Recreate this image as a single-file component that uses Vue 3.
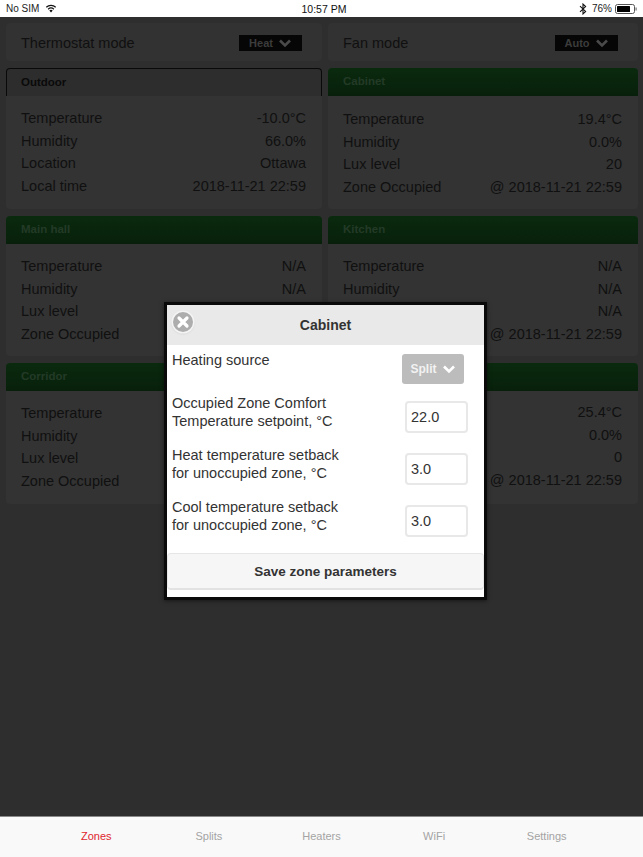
<template>
  <div class="screen">
    <div class="statusBar">
      <div class="statusLeft">
        <span>No SIM</span>
        <svg width="12" height="9" viewBox="0 0 15 11">
          <path d="M7.5 10.5 L5.4 8 A3.2 3.2 0 0 1 9.6 8 Z" fill="#111" />
          <path d="M3.9 6.3 A5.6 5.6 0 0 1 11.1 6.3" fill="none" stroke="#111" stroke-width="1.6" />
          <path d="M1.6 3.9 A8.8 8.8 0 0 1 13.4 3.9" fill="none" stroke="#111" stroke-width="1.6" />
        </svg>
      </div>
      <div class="statusTime">10:57 PM</div>
      <div class="statusRight">
        <svg width="8" height="12" viewBox="0 0 8 12">
          <path d="M1 3.2 L6.6 8.4 L4 10.9 V1.1 L6.6 3.6 L1 8.8" fill="none" stroke="#111" stroke-width="1.1" />
        </svg>
        <span class="batteryText">76%</span>
        <svg width="22" height="10" viewBox="0 0 22 10">
          <rect x="0.5" y="0.5" width="19" height="9" rx="2" fill="none" stroke="#555" />
          <rect x="2" y="2" width="13" height="6" rx="0.5" fill="#000" />
          <rect x="20.5" y="3.5" width="1.2" height="3" fill="#777" />
        </svg>
      </div>
    </div>

    <div class="main">
      <div class="grid">
        <div class="modeBox">
          <span>Thermostat mode</span>
          <div class="modeSelect">Heat
            <svg width="14" height="10" viewBox="0 0 14 10"><path d="M2 2.5 L7 7.5 L12 2.5" fill="none" stroke="#4a4a4a" stroke-width="2.6" /></svg>
          </div>
        </div>
        <div class="modeBox">
          <span>Fan mode</span>
          <div class="modeSelect">Auto
            <svg width="14" height="10" viewBox="0 0 14 10"><path d="M2 2.5 L7 7.5 L12 2.5" fill="none" stroke="#4a4a4a" stroke-width="2.6" /></svg>
          </div>
        </div>

        <div v-for="zone in zones" :key="zone.id" class="card">
          <div :class="['cardHeader', zone.outdoor ? 'outdoorHeader' : 'zoneHeader']">{{ zone.name }}</div>
          <div class="cardBody">
            <div v-for="(row, i) in zone.rows" :key="i" class="cardRow">
              <span>{{ row[0] }}</span>
              <span>{{ row[1] }}</span>
            </div>
          </div>
        </div>
      </div>

      <div class="modal">
        <div class="modalHeader">
          <span class="closeBtn">
            <svg width="14" height="14" viewBox="0 0 14 14"><path d="M3 3 L11 11 M11 3 L3 11" stroke="#fff" stroke-width="3.2" stroke-linecap="round" /></svg>
          </span>
          Cabinet
        </div>
        <div class="modalBody">
          <div class="formRow sourceRow">
            <div class="formLabel">Heating source</div>
            <div class="sourceSelect">Split
              <svg width="14" height="10" viewBox="0 0 14 10"><path d="M2 2.5 L7 7.5 L12 2.5" fill="none" stroke="#fff" stroke-width="2.6" /></svg>
            </div>
          </div>
          <div v-for="field in fields" :key="field.first" class="formRow">
            <div class="formLabel">{{ field.first }}<br />{{ field.second }}</div>
            <div class="formInput">{{ field.value }}</div>
          </div>
        </div>
        <div class="saveBtn">Save zone parameters</div>
      </div>
    </div>

    <div class="tabBar">
      <span v-for="(tab, i) in tabs" :key="tab" :class="['tab', i === 0 ? 'activeTab' : '']">{{ tab }}</span>
    </div>
  </div>
</template>

<script setup>
// blank cells are the ones the popup covers
const zones = [
  { id: 1, name: 'Outdoor', outdoor: true, rows: [['Temperature', '-10.0°C'], ['Humidity', '66.0%'], ['Location', 'Ottawa'], ['Local time', '2018-11-21 22:59']] },
  { id: 2, name: 'Cabinet', rows: [['Temperature', '19.4°C'], ['Humidity', '0.0%'], ['Lux level', '20'], ['Zone Occupied', '@ 2018-11-21 22:59']] },
  { id: 3, name: 'Main hall', rows: [['Temperature', 'N/A'], ['Humidity', 'N/A'], ['Lux level', ''], ['Zone Occupied', '']] },
  { id: 4, name: 'Kitchen', rows: [['Temperature', 'N/A'], ['Humidity', 'N/A'], ['', 'N/A'], ['', '@ 2018-11-21 22:59']] },
  { id: 5, name: 'Corridor', rows: [['Temperature', ''], ['Humidity', ''], ['Lux level', ''], ['Zone Occupied', '']] },
  { id: 6, name: '', rows: [['', '25.4°C'], ['', '0.0%'], ['', '0'], ['', '@ 2018-11-21 22:59']] }
]

const fields = [
  { first: 'Occupied Zone Comfort', second: 'Temperature setpoint, °C', value: '22.0' },
  { first: 'Heat temperature setback', second: 'for unoccupied zone, °C', value: '3.0' },
  { first: 'Cool temperature setback', second: 'for unoccupied zone, °C', value: '3.0' }
]

const tabs = ['Zones', 'Splits', 'Heaters', 'WiFi', 'Settings']
</script>

<style>
html, body {
  margin: 0;
  background: #2e2e2e;
}
</style>

<style scoped>
.screen {
  width: 643px;
  height: 857px;
  display: flex;
  flex-direction: column;
  overflow: hidden;
  font-family: "Liberation Sans", Arial, sans-serif;
}

/* status bar */
.statusBar {
  height: 17px;
  background: #fff;
  display: grid;
  grid-template-columns: 1fr auto 1fr;
  align-items: center;
  padding: 0 6px;
  font-size: 10px;
  color: #222;
  flex-shrink: 0;
}

.statusLeft {
  display: flex;
  align-items: center;
  gap: 6px;
}

.statusTime {
  font-size: 10.5px;
  color: #111;
  margin-left: 5px;
}

.statusRight {
  display: flex;
  align-items: center;
  justify-content: flex-end;
  gap: 3px;
}

.batteryText {
  margin-left: 2px;
}

/* dimmed page */
.main {
  position: relative;
  flex: 1;
  background: #2e2e2e;
  padding: 6px 5px 0 6px;
}

.grid {
  display: grid;
  grid-template-columns: 316px 310px;
  grid-template-rows: 38px 141px 140px 141px;
  column-gap: 6px;
  row-gap: 7px;
}

.modeBox {
  box-sizing: border-box;
  background: #323232;
  border-radius: 4px;
  display: flex;
  align-items: center;
  justify-content: space-between;
  padding: 1px 20px 0 15px;
  font-size: 14.5px;
  color: #101010;
}

.modeSelect {
  display: flex;
  align-items: center;
  justify-content: center;
  gap: 5px;
  width: 63px;
  height: 16px;
  background: #060606;
  font-size: 11px;
  font-weight: bold;
  color: #3c3c3c;
}

.card {
  background: #333;
  border-radius: 4px;
}

.cardHeader {
  height: 28px;
  box-sizing: border-box;
  padding-left: 15px;
  line-height: 27px;
  font-size: 11.5px;
  font-weight: bold;
  border-radius: 4px 4px 0 0;
}

.outdoorHeader {
  background: #2d2d2d;
  border: 1px solid #090909;
  border-bottom: none;
  padding-left: 14px;
  color: #0a0a0a;
}

.zoneHeader {
  background: linear-gradient(#0a2a0e, #08200b);
  color: #233a27;
}

.cardBody {
  padding: 11px 16px 0 15px;
}

.cardRow {
  display: flex;
  justify-content: space-between;
  height: 22.7px;
  line-height: 22.7px;
  font-size: 14.5px;
  color: #101010;
}

/* the right column sits a pixel off in the first and last row */
.card:nth-child(4) .cardBody {
  padding-top: 12px;
}

.card:nth-child(8) .cardBody {
  padding-top: 10px;
}

/* popup */
.modal {
  position: absolute;
  left: 167px;
  top: 288px;
  width: 317px;
  height: 292px;
  background: #fff;
  box-shadow: 0 0 0 3px #0a0a0a, 0 1px 4px 3px rgba(0, 0, 0, 0.5);
  color: #333;
}

.modalHeader {
  position: relative;
  height: 40px;
  background: #e9e9e9;
  text-align: center;
  line-height: 40px;
  font-size: 14px;
  font-weight: bold;
}

.closeBtn {
  position: absolute;
  left: 6px;
  top: 7px;
  width: 20px;
  height: 20px;
  border-radius: 50%;
  background: #adadad;
  box-shadow: 0 0 0 1.5px #f4f4f4, 0 1px 3px rgba(0, 0, 0, 0.25);
  display: flex;
  align-items: center;
  justify-content: center;
}

.modalBody {
  padding: 5px 16px 0 5px;
  height: 208px;
  box-sizing: border-box;
  display: flex;
  flex-direction: column;
}

.formRow {
  display: flex;
  justify-content: space-between;
  flex-shrink: 0;
  height: 52px;
  font-size: 14.5px;
  line-height: 18px;
}

.formLabel {
  padding-top: 1px;
}

.sourceRow {
  height: 43px;
}

.sourceSelect {
  display: flex;
  align-items: center;
  justify-content: center;
  gap: 5px;
  width: 62px;
  height: 30px;
  margin-top: 4px;
  margin-right: 4px;
  border-radius: 3px;
  background: #bcbcbc;
  color: #f2f2f2;
  font-size: 12px;
  font-weight: bold;
}

.formInput {
  width: 63px;
  height: 32px;
  margin-top: 8px;
  box-sizing: border-box;
  border: 2px solid #e8e8e8;
  border-radius: 4px;
  padding-left: 4px;
  line-height: 29px;
  font-size: 14.5px;
}

.saveBtn {
  height: 37px;
  box-sizing: border-box;
  background: #f6f6f6;
  border: 1px solid #e6e6e6;
  border-bottom: 2px solid #e2e2e2;
  border-radius: 4px;
  text-align: center;
  line-height: 35px;
  font-size: 13.5px;
  font-weight: bold;
}

/* bottom tabs */
.tabBar {
  height: 41px;
  flex-shrink: 0;
  background: #f9f9f9;
  border-top: 1px solid #8a8a8a;
  box-sizing: border-box;
  padding: 0 40px 2px;
  display: grid;
  grid-template-columns: repeat(5, 1fr);
  align-items: center;
}

.tab {
  text-align: center;
  font-size: 11px;
  color: #a4a4a4;
}

.activeTab {
  color: #e0262e;
}
</style>
